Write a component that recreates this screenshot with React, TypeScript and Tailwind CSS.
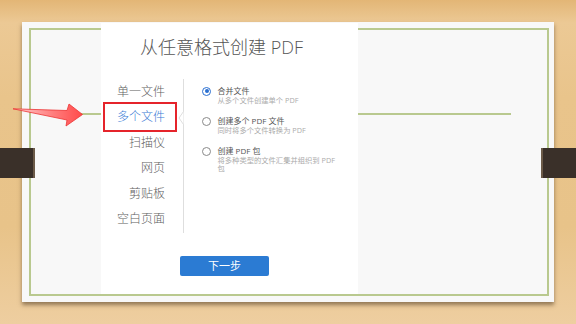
import React from "react";

const menuItems = ["单一文件", "多个文件", "扫描仪", "网页", "剪贴板", "空白页面"];

const options = [
  { title: "合并文件", desc: "从多个文件创建单个 PDF", checked: true },
  { title: "创建多个 PDF 文件", desc: "同时将多个文件转换为 PDF", checked: false },
  { title: "创建 PDF 包", desc: "将多种类型的文件汇集并组织到 PDF 包", checked: false },
];

const Radio = ({ checked }: { checked: boolean }) => (
  <span
    className={
      checked
        ? "mt-[0.5px] flex h-[9px] w-[9px] shrink-0 items-center justify-center rounded-full border border-[#2a6fd1] bg-white"
        : "mt-[0.5px] flex h-[9px] w-[9px] shrink-0 items-center justify-center rounded-full border border-[#8a8a8a] bg-white"
    }
  >
    {checked && <span className="h-[4px] w-[4px] rounded-full bg-[#2a6fd1]" />}
  </span>
);

const App = () => {
  return (
    <div
      className="relative h-[324px] w-[576px] overflow-hidden pl-[22px] pt-[22px] bg-[linear-gradient(180deg,#e3b676_0%,#ecc995_7%,#e9c48b_30%,#e8c389_70%,#eecea0_100%)]"
      style={{ fontFamily: '"Open Sans", "Noto Sans CJK SC", sans-serif' }}
    >
      {/* slide card */}
      <div className="h-[280px] w-[532px] bg-[#f8f8f8] pb-[6px] pl-[7px] pr-[5px] pt-[6px] shadow-[0_3px_4px_rgba(60,40,20,0.5)]">
        <div className="flex h-[268px] w-[520px] border-2 border-[#b9c98f]">
          <div className="w-[70px] shrink-0">
            <div className="ml-[45px] mt-[83px] h-[2px] bg-[#b9c98f]" />
          </div>

          {/* dialog */}
          <div className="-mt-[7px] h-[271px] w-[257px] shrink-0 bg-white">
            <div className="pl-[39px] pt-[12px] text-[18px] font-light leading-[24px] text-[#555]">
              从任意格式创建 PDF
            </div>

            <div className="mt-[19px] flex h-[155px]">
              <div className="w-[76px] shrink-0 pt-[0.5px]">
                {menuItems.map((item, index) => (
                  <div
                    key={item}
                    className={
                      index === 1
                        ? "relative h-[25.6px] pr-[12px] text-right text-[12px] font-light leading-[25.6px] text-[#3a7bd5]"
                        : "relative h-[25.6px] pr-[12px] text-right text-[12px] font-light leading-[25.6px] text-[#5f5f5f]"
                    }
                  >
                    {item}
                    {index === 1 && (
                      <span className="absolute -bottom-[2px] -top-[2px] left-[2px] right-0 border-2 border-[#e5242b]" />
                    )}
                  </div>
                ))}
              </div>

              <div className="relative ml-[6px] mt-[1px] w-px bg-[#dedede]">
                <svg className="absolute -left-[5px] top-[32px]" width="6" height="14" viewBox="0 0 6 14">
                  <path d="M5.5 0.5 L1 7 L5.5 13.5" fill="white" stroke="#dedede" strokeWidth="1" />
                </svg>
              </div>

              <div className="ml-[18px] flex flex-col gap-[12px] pt-[8px]">
                {options.map((opt) => (
                  <div key={opt.title} className="flex items-start gap-[6.5px]">
                    <Radio checked={opt.checked} />
                    <div className="w-[126px]">
                      <div className="text-[8px] leading-[10px] text-[#555]">{opt.title}</div>
                      <div className="text-[7.3px] leading-[8px] text-[#ababab]">{opt.desc}</div>
                    </div>
                  </div>
                ))}
              </div>
            </div>

            <button className="ml-[79px] mt-[23px] flex h-[20px] w-[89px] items-center justify-center rounded-[2px] bg-[#2b7bd3] text-[11px] text-white">
              下一步
            </button>
          </div>

          <div className="flex-1">
            <div className="mt-[83px] h-[2px] w-[153px] bg-[#b9c98f]" />
          </div>
        </div>
      </div>

      {/* binder tabs */}
      <div className="absolute left-0 top-[148px] h-[30px] w-[35px] border-r-2 border-[#6b5a48] bg-[#3a3029]" />
      <div className="absolute right-0 top-[148px] h-[30px] w-[35px] border-l-2 border-[#6b5a48] bg-[#3a3029]" />

      {/* annotation arrow */}
      <svg className="absolute left-0 top-0" width="100" height="140" viewBox="0 0 100 140">
        <defs>
          <linearGradient id="arrowFill" x1="0" y1="0" x2="1" y2="0">
            <stop offset="0" stopColor="#ffd0d0" />
            <stop offset="0.6" stopColor="#ff7a7a" />
            <stop offset="1" stopColor="#ff4a4a" />
          </linearGradient>
        </defs>
        <path
          d="M13 108.8 L67 110.5 L69 104 L82.5 114.5 L66 126 L67 120 Z"
          fill="url(#arrowFill)"
          stroke="#ec3434"
          strokeWidth="0.8"
          strokeLinejoin="round"
        />
      </svg>
    </div>
  );
};

export default App;
